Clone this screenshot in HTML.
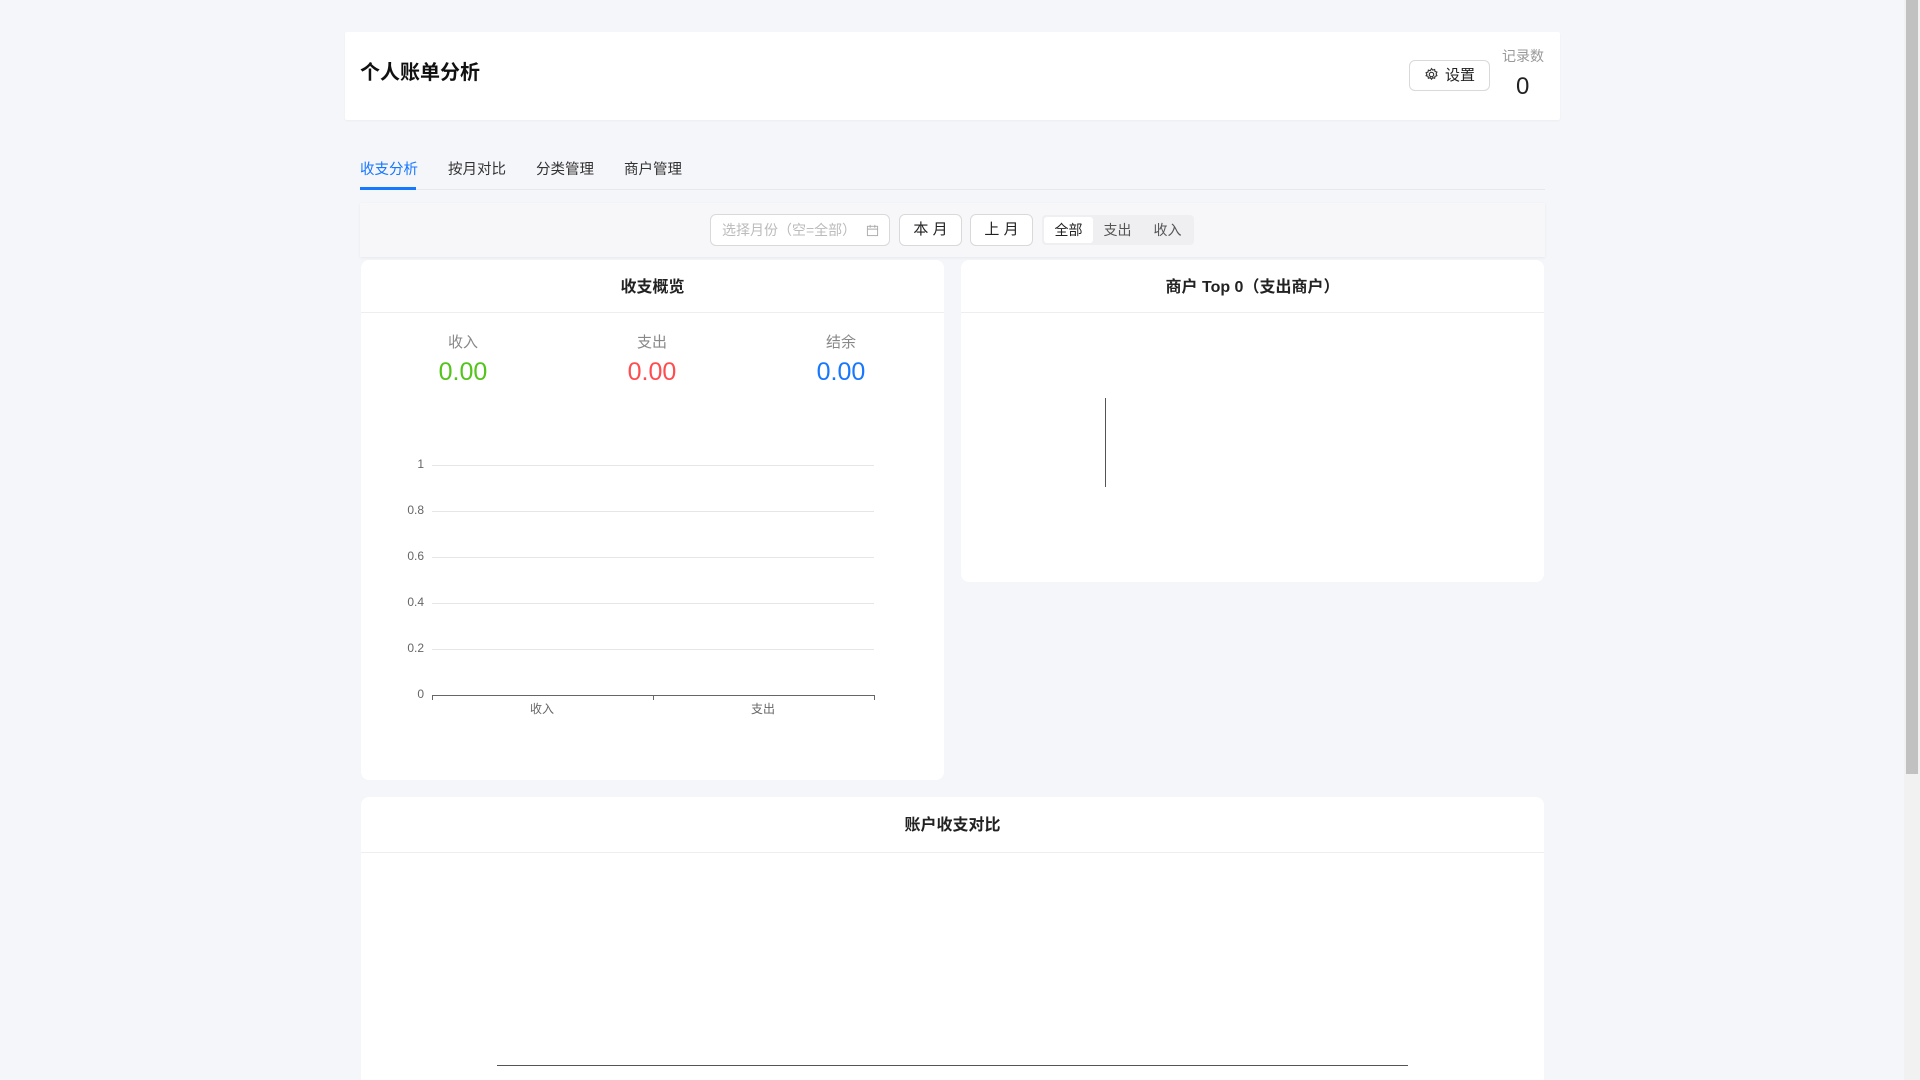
<!DOCTYPE html>
<html style="overflow:hidden;height:1080px"><head><meta charset="utf-8"><style>
*{box-sizing:border-box;margin:0;padding:0}
body{width:1920px;height:1080px;overflow:hidden;background:#f5f6fa;font-family:"Liberation Sans","Noto Sans CJK SC",sans-serif;color:#222;position:relative}
.abs{position:absolute}
.card{position:absolute;background:#fff;border-radius:8px}
.hdr{position:absolute;left:0;right:0;top:0;height:53px;border-bottom:1px solid #eceef2;text-align:center;line-height:53px;font-size:16px;font-weight:bold;color:#222}
.btn{position:absolute;border:1px solid #d9d9d9;border-radius:6px;background:#fff;text-align:center;font-size:15px;color:#222}
.lbl{position:absolute;font-size:15px;color:#888;text-align:center;width:120px}
.val{position:absolute;font-size:25px;text-align:center;width:160px}
.yl{position:absolute;font-size:12px;color:#666;width:30px;text-align:right}
.gl{position:absolute;left:432px;width:442px;height:1px;background:#e6e6e6}
.tab{position:absolute;top:158px;font-size:14.5px;color:#333}
</style></head><body>
<div class="card" style="left:345px;top:32px;width:1215px;height:88px;border-radius:2px;box-shadow:0 1px 2px rgba(0,0,0,.04)">
  <div class="abs" style="left:15px;top:24px;font-size:20px;font-weight:bold;color:#111">个人账单分析</div>
  <div class="btn" style="left:1064px;top:28px;width:81px;height:31px;line-height:29px">
    <svg width="15" height="15" viewBox="0 0 24 24" style="vertical-align:-2px;margin-right:6px" fill="none" stroke="#333" stroke-width="1.8"><circle cx="12" cy="12" r="3.5"/><path d="M12 2.5l2 2.5 3-1 .6 3.1 3 1-1.2 2.9 1.2 2.9-3 1-.6 3.1-3-1-2 2.5-2-2.5-3 1-.6-3.1-3-1L4.6 12 3.4 9.1l3-1L7 5l3 1z"/></svg>设置</div>
  <div class="abs" style="left:1157px;top:14px;font-size:14px;color:#999">记录数</div>
  <div class="abs" style="left:1171px;top:41px;font-size:24px;color:#222">0</div>
</div>
<div class="tab" style="left:360px;color:#1677ff">收支分析</div>
<div class="tab" style="left:448px">按月对比</div>
<div class="tab" style="left:536px">分类管理</div>
<div class="tab" style="left:624px">商户管理</div>
<div class="abs" style="left:360px;top:189px;width:1185px;height:1px;background:#e8e8ec"></div>
<div class="abs" style="left:360px;top:187px;width:56px;height:3px;background:#1677ff"></div>

<div class="abs" style="left:360px;top:203px;width:1185px;height:54px;background:#f7f7f9;box-shadow:0 1px 3px rgba(0,0,0,.06)">
  <div class="btn" style="left:350px;top:11px;width:180px;height:32px;line-height:30px;text-align:left;padding-left:11px;color:#bbb;font-size:14px">选择月份（空=全部）<svg class="abs" style="right:10px;top:9px" width="13" height="13" viewBox="0 0 14 14" fill="none" stroke="#aaa"><rect x="1.5" y="2.5" width="11" height="10"/><path d="M1.5 5.5h11M4.5 1v3M9.5 1v3"/></svg></div>
  <div class="btn" style="left:539px;top:11px;width:63px;height:32px;line-height:30px">本 月</div>
  <div class="btn" style="left:610px;top:11px;width:63px;height:32px;line-height:30px">上 月</div>
  <div class="abs" style="left:682px;top:12px;width:152px;height:30px;background:#efeff1;border-radius:4px;font-size:14px;line-height:30px;color:#555">
    <div class="abs" style="left:2px;top:2px;width:49px;height:26px;background:#fff;border-radius:3px;line-height:26px;text-align:center;color:#222">全部</div>
    <div class="abs" style="left:53px;width:45px;text-align:center">支出</div>
    <div class="abs" style="left:103px;width:45px;text-align:center">收入</div>
  </div>
</div>

<div class="card" style="left:361px;top:260px;width:583px;height:520px"><div class="hdr" style="line-height:55px">收支概览</div></div>
<div class="lbl" style="left:403px;top:331px">收入</div>
<div class="lbl" style="left:592px;top:331px">支出</div>
<div class="lbl" style="left:781px;top:331px">结余</div>
<div class="val" style="left:383px;top:358px;color:#52c41a">0.00</div>
<div class="val" style="left:572px;top:358px;color:#ff4d4f">0.00</div>
<div class="val" style="left:761px;top:358px;color:#1677ff">0.00</div>
<div class="gl" style="top:465px"></div><div class="gl" style="top:511px"></div><div class="gl" style="top:557px"></div><div class="gl" style="top:603px"></div><div class="gl" style="top:649px"></div>
<div class="abs" style="left:432px;top:695px;width:443px;height:1px;background:#666"></div>
<div class="abs" style="left:432px;top:695px;width:1px;height:5px;background:#666"></div>
<div class="abs" style="left:653px;top:695px;width:1px;height:5px;background:#666"></div>
<div class="abs" style="left:874px;top:695px;width:1px;height:5px;background:#666"></div>
<div class="yl" style="left:394px;top:457px">1</div>
<div class="yl" style="left:394px;top:503px">0.8</div>
<div class="yl" style="left:394px;top:549px">0.6</div>
<div class="yl" style="left:394px;top:595px">0.4</div>
<div class="yl" style="left:394px;top:641px">0.2</div>
<div class="yl" style="left:394px;top:687px">0</div>
<div class="abs" style="left:522px;top:700px;width:40px;text-align:center;font-size:12px;color:#666">收入</div>
<div class="abs" style="left:743px;top:700px;width:40px;text-align:center;font-size:12px;color:#666">支出</div>

<div class="card" style="left:961px;top:260px;width:583px;height:322px"><div class="hdr" style="line-height:55px">商户 Top 0（支出商户）</div>
<div class="abs" style="left:144px;top:138px;width:1px;height:89px;background:#555"></div></div>

<div class="card" style="left:361px;top:797px;width:1183px;height:283px;border-radius:8px 8px 0 0"><div class="hdr" style="height:56px;line-height:58px">账户收支对比</div>
<div class="abs" style="left:136px;top:268px;width:911px;height:1px;background:#555"></div></div>

<div class="abs" style="left:1904px;top:0;width:16px;height:1080px;background:#f1f1f1"></div>
<div class="abs" style="left:1906px;top:0;width:12px;height:774px;background:#c1c1c1"></div>
</body></html>
